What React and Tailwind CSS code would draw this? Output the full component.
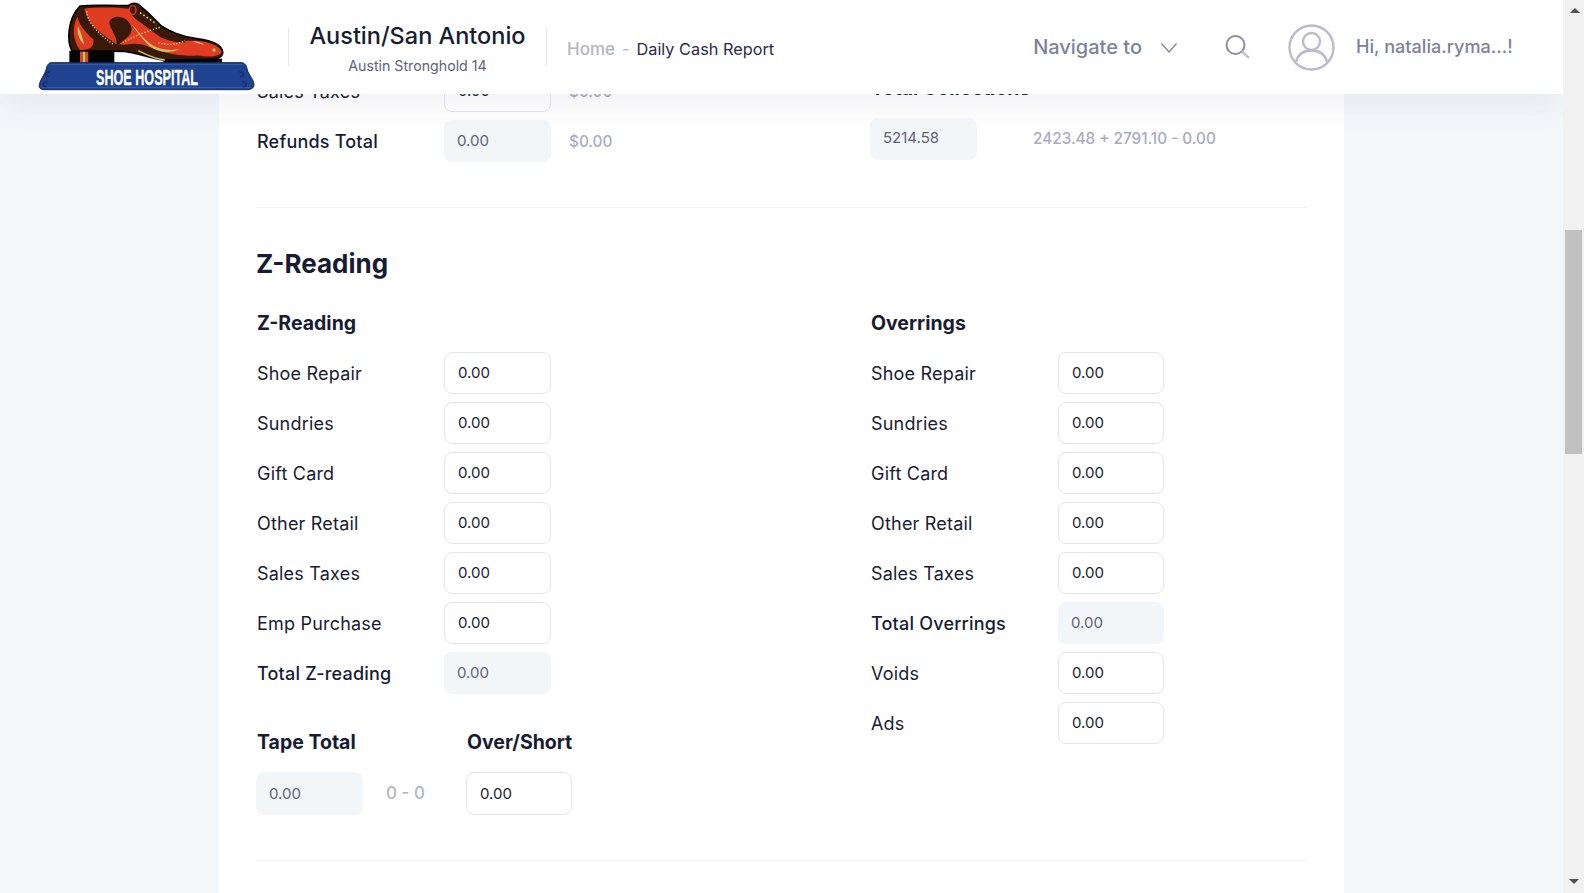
import React from "react";

const Amount = ({ value = "0.00", solid = false, className = "w-[107px]" }) => (
    <input
        readOnly
        value={value}
        className={`h-[42px] rounded-[8px] px-[13px] pb-[1px] text-[15px] outline-none ${solid ? "bg-[#f3f6f9] text-[#5e6278]" : "border border-[#e4e6ef] bg-white text-[#181c32]"} ${className}`}
    />
);

const Row = ({ label, value, solid, strong, note, inputClass }) => (
    <div className="mb-[8px] flex h-[42px] items-center">
        <label className={`w-[188px] pl-px text-[18px] tracking-[0.2px] text-[#181c32] ${strong ? "font-medium" : ""}`}>{label}</label>
        <Amount value={value} solid={solid} className={inputClass} />
        {note && <span className="ml-[18px] mt-[3px] text-[15.3px] font-medium text-[#a9abbf]">{note}</span>}
    </div>
);

const SubTitle = ({ children, className = "" }) => (
    <h3 className={`pl-px text-[19.5px] font-bold leading-[28px] text-[#181c32] ${className}`}>{children}</h3>
);

const ShoeLogo = () => (
    <svg width="240" height="100" viewBox="0 0 720 300" className="shrink-0 self-start">
        {/* heel + sole */}
        <rect x="118" y="153" width="135" height="36" fill="#050505" />
        <rect x="150" y="153" width="9" height="36" fill="#d8472a" />
        <rect x="159" y="153" width="8" height="36" fill="#c4c46a" />
        <rect x="167" y="153" width="8" height="36" fill="#d8472a" />
        <rect x="400" y="176" width="176" height="13" fill="#050505" />
        {/* upper */}
        <path
            d="M150 18 C190 14 250 18 296 16 C305 8 320 8 326 14 L356 40 L392 76 C420 96 460 110 500 116 C545 122 578 135 578 158 C578 172 565 178 530 178 L400 180 C360 174 325 160 285 154 L125 152 C112 125 110 60 150 18Z"
            fill="#3a190b"
            stroke="#050505"
            strokeWidth="5"
        />
        {/* counter and vamp panels */}
        <path d="M163 26 C200 21 260 22 296 26 C304 46 322 64 345 90 C350 112 320 128 280 134 L258 132 C225 108 195 90 180 64 C172 50 166 38 163 26Z" fill="#e03c22" />
        <path d="M238 68 C240 50 268 44 288 58 C304 72 312 90 296 108 C285 118 275 128 258 138 C268 118 240 88 238 68Z" fill="#3a190b" />
        <path d="M300 44 C325 62 365 92 392 112 C420 126 450 128 475 128 C495 142 512 152 520 166 C470 170 410 164 355 140 C335 130 310 130 285 134 C320 115 345 105 330 80 C318 68 308 56 300 44Z" fill="#e03c22" />
        <path d="M142 50 C126 80 128 120 150 150 C175 152 195 140 190 118 C170 100 150 80 142 50Z" fill="#e03c22" />
        <path d="M462 124 C510 118 572 132 575 158 C560 172 530 172 505 166 C498 148 480 138 462 124Z" fill="#e03c22" />
        <path d="M144 78 C140 100 148 120 162 134 C158 112 152 96 144 78Z" fill="#c8c46c" />
        <path d="M305 72 C335 105 350 130 380 142 C405 152 430 150 450 148 C420 160 385 160 355 135 C335 115 318 92 305 72Z" fill="#c8c46c" />
        <path d="M488 124 C505 124 515 128 522 134 C510 132 498 130 488 124Z" fill="#f1a68c" />
        <circle cx="552" cy="150" r="5" fill="#c8c46c" />
        <path d="M170 34 C172 60 190 90 252 135" fill="none" stroke="#d9d47c" strokeWidth="4" strokeDasharray="4 5" />
        <path d="M278 128 C310 110 345 95 390 82" fill="none" stroke="#d9d47c" strokeWidth="4" strokeDasharray="4 5" />
        <path d="M385 128 C410 136 440 135 465 122" fill="none" stroke="#d9d47c" strokeWidth="4" strokeDasharray="4 5" />
        <path d="M325 152 C350 165 380 178 405 180" fill="none" stroke="#c8c46c" strokeWidth="4" />
        <path d="M330 38 L380 72" fill="none" stroke="#d9d47c" strokeWidth="5" strokeDasharray="5 7" />
        <ellipse cx="308" cy="30" rx="10" ry="13" fill="#3a190b" stroke="#e03c22" strokeWidth="4" />
        {/* banner */}
        <path
            d="M62 188 L636 188 C646 190 650 198 652 210 C656 224 672 240 672 254 C672 264 664 268 654 269 L42 269 C32 268 26 264 28 254 C30 240 44 224 48 210 C50 198 54 190 62 188Z"
            fill="#21428f"
            stroke="#14244f"
            strokeWidth="3"
        />
        <path d="M62 193 L636 193 M36 263 L662 263" stroke="#2f62b8" strokeWidth="3" fill="none" />
        <path d="M60 216 C44 214 44 232 58 230 M52 246 C36 244 36 262 50 260" fill="none" stroke="#16306f" strokeWidth="5" />
        <path d="M628 216 C644 214 644 232 630 230 M636 246 C652 244 652 262 638 260" fill="none" stroke="#16306f" strokeWidth="5" />
        <text
            x="0"
            y="0"
            transform="translate(198 254) scale(0.557 1)"
            fill="#ffffff"
            stroke="#ffffff"
            strokeWidth="1"
            fontFamily="'Liberation Sans', sans-serif"
            fontWeight="700"
            fontSize="68"
        >
            SHOE HOSPITAL
        </text>
    </svg>
);

const TopBar = () => (
    <header className="absolute left-0 top-0 flex h-[94px] w-[1563px] items-center bg-white pl-[30px] shadow-[0_10px_30px_rgba(82,63,105,0.08)]">
        <ShoeLogo />
        <div className="ml-[18px] h-[38px] w-px bg-[#e4e6ef]" />
        <div className="flex w-[257px] flex-col items-center">
            <span className="mt-[1px] text-[23.5px] font-medium leading-[34px] text-[#181c32]">Austin/San Antonio</span>
            <span className="mt-[3px] text-[14.2px] leading-[20px] text-[#5e6278]">Austin Stronghold 14</span>
        </div>
        <div className="h-[38px] w-px bg-[#e4e6ef]" />
        <div className="ml-[20px] mt-[5px] flex items-center text-[16.3px]">
            <span className="text-[17px] font-medium text-[#b5b5c3]">Home</span>
            <span className="mx-[7px] text-[#b5b5c3]">-</span>
            <span className="text-[#2b2b45]">Daily Cash Report</span>
        </div>
        <div className="ml-auto flex items-center pr-[50px]">
            <span className="mb-[1px] text-[20px] font-medium text-[#7e8299]">Navigate to</span>
            <svg width="16" height="10" viewBox="0 0 16 10" className="ml-[19px] mt-[2px]" fill="none" stroke="#7e8299" strokeWidth="1.2">
                <path d="M0.5 0.5 L8 9 L15.5 0.5" />
            </svg>
            <svg width="26" height="24" viewBox="0 0 26 24" className="ml-[48px]" fill="none">
                <circle cx="10.5" cy="10" r="9" stroke="#8a8da6" strokeWidth="2" />
                <path d="M17 16.5 L24 23" stroke="#c4c5d3" strokeWidth="2.4" />
            </svg>
            <svg width="47" height="47" viewBox="0 0 47 47" className="ml-[37px]" fill="none" stroke="#bcbbca" strokeWidth="2.4">
                <circle cx="23.5" cy="23.5" r="22" />
                <circle cx="23.5" cy="17.5" r="8.5" />
                <path d="M8 38 C10 30 16 26.5 23.5 26.5 C31 26.5 37 30 39 38" />
            </svg>
            <span className="ml-[21px] w-[157px] text-[18.1px] font-medium text-[#7e8299]">Hi, natalia.ryma...!</span>
        </div>
    </header>
);

const zReading = ["Shoe Repair", "Sundries", "Gift Card", "Other Retail", "Sales Taxes", "Emp Purchase"];
const overrings = ["Shoe Repair", "Sundries", "Gift Card", "Other Retail", "Sales Taxes"];

export default function App() {
    return (
        <div className="relative flex h-[893px] w-[1584px] overflow-hidden bg-[#f3f7fa] font-['Inter',sans-serif]">
            <main className="h-full flex-1 overflow-hidden pl-[219px]">
                <div className="h-full w-[1125px] bg-white px-[37px] pt-[70px]">
                    <div className="grid grid-cols-[614px_1fr]">
                        <div>
                            <Row label="Sales Taxes" value="0.00" note="$0.00" />
                            <Row label="Refunds Total" strong solid value="0.00" note="$0.00" />
                        </div>
                        <div>
                            <SubTitle className="h-[48px] pt-[4px]">Total Collections</SubTitle>
                            <div className="flex items-center">
                                <Amount solid value="5214.58" className="w-[107px] pb-[3px]" />
                                <span className="ml-[56px] mt-[1px] text-[15.3px] font-medium text-[#a9abbf]">2423.48 + 2791.10 - 0.00</span>
                            </div>
                        </div>
                    </div>

                    <div className="mt-[37px] border-t border-[#eff2f5]" />

                    <h2 className="mt-[36px] text-[26px] font-bold leading-[40px] text-[#181c32]">Z-Reading</h2>

                    <div className="mt-[25px] grid grid-cols-[614px_1fr]">
                        <div>
                            <SubTitle className="mb-[15px]">Z-Reading</SubTitle>
                            {zReading.map((label) => (
                                <Row key={label} label={label} />
                            ))}
                            <Row label="Total Z-reading" strong solid />
                            <div className="mt-[34px] flex">
                                <div>
                                    <SubTitle className="mb-[16px]">Tape Total</SubTitle>
                                    <div className="flex items-center">
                                        <Amount solid className="h-[43px] w-[107px]" />
                                        <span className="ml-[23px] w-[80px] text-[17px] font-medium text-[#b5b5c3]">0 - 0</span>
                                    </div>
                                </div>
                                <div>
                                    <SubTitle className="mb-[16px]">Over/Short</SubTitle>
                                    <Amount className="h-[43px] w-[106px]" />
                                </div>
                            </div>
                        </div>
                        <div>
                            <SubTitle className="mb-[15px]">Overrings</SubTitle>
                            {overrings.map((label) => (
                                <Row key={label} label={label} inputClass="w-[106px]" />
                            ))}
                            <Row label="Total Overrings" strong solid inputClass="w-[106px]" />
                            <Row label="Voids" inputClass="w-[106px]" />
                            <Row label="Ads" inputClass="w-[106px]" />
                        </div>
                    </div>

                    <div className="mt-[45px] border-t border-[#eff2f5]" />
                </div>
            </main>

            <TopBar />

            {/* page scrollbar */}
            <div className="relative h-full w-[21px] shrink-0 bg-[#f1f1f1]">
                <div className="absolute left-[7px] top-[8px] h-0 w-0 border-x-[5px] border-b-[5px] border-x-transparent border-b-[#505050]" />
                <div className="absolute left-[2px] top-[230px] h-[224px] w-[17px] bg-[#c1c1c1]" />
                <div className="absolute bottom-[9px] left-[6px] h-0 w-0 border-x-[5px] border-t-[5px] border-x-transparent border-t-[#505050]" />
            </div>
        </div>
    );
}
